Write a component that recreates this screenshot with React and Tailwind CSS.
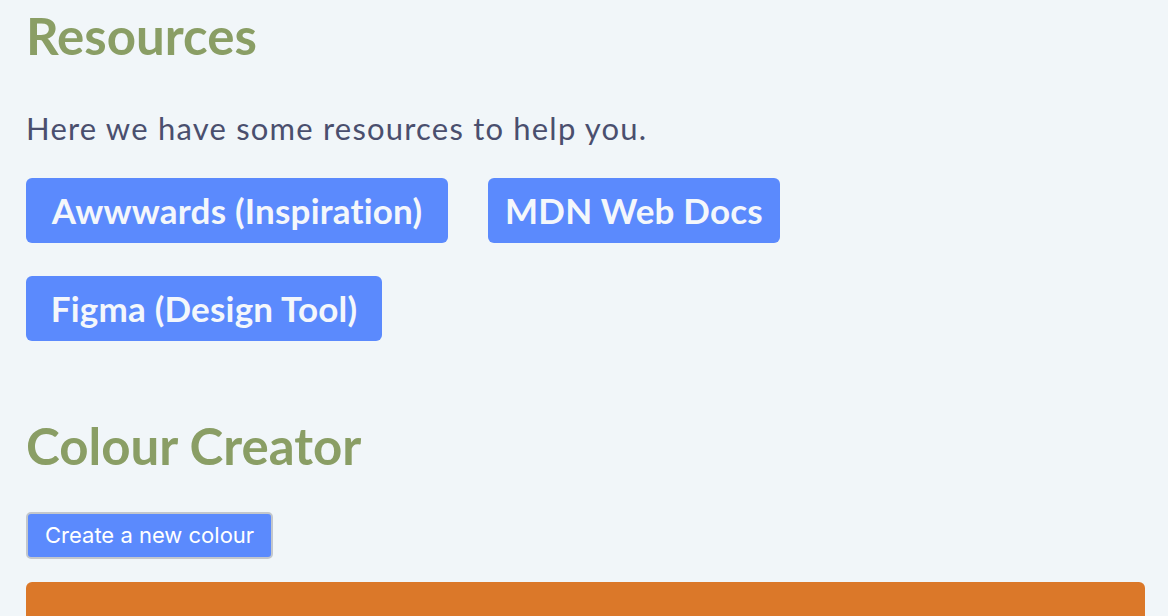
import React from "react";

const links = [
  [
    { label: "Awwwards (Inspiration)", w: "w-[422px]" },
    { label: "MDN Web Docs", w: "w-[292px]" },
  ],
  [{ label: "Figma (Design Tool)", w: "w-[356px]" }],
];

const LinkButton = ({ label, w }) => (
  <a
    href="#"
    className={`flex h-[65px] ${w} items-center justify-center rounded-[6px] bg-[#5b8afd] text-[35px] font-bold tracking-[0.2px] text-[#f4f7fb]`}
  >
    {label}
  </a>
);

export default function App() {
  return (
    <div className="h-[616px] overflow-hidden bg-[#f1f6f9] pl-[26px] pr-[23px] font-['Lato',sans-serif]">
      <h1 className="pt-[10px] text-[51px] font-bold leading-none text-[#8a9e65]">Resources</h1>
      <p className="mt-[52px] text-[31px] leading-none tracking-[1.2px] text-[#4a4f6e]">
        Here we have some resources to help you.
      </p>
      <div className="mt-[34px] flex flex-col gap-[33px]">
        {links.map((row, i) => (
          <div key={i} className="flex gap-[40px]">
            {row.map((l) => (
              <LinkButton key={l.label} {...l} />
            ))}
          </div>
        ))}
      </div>

      <h2 className="mt-[79px] text-[51px] font-bold leading-none text-[#8a9e65]">Colour Creator</h2>
      <button className="mt-[41px] flex h-[47px] items-center rounded-[5px] border-2 border-[#c3c7cc] bg-[#5b8afd] px-[17px] font-['Inter',sans-serif] text-[22px] text-white">
        Create a new colour
      </button>
      <div className="mt-[23px] h-[120px] rounded-[6px] bg-[#db7829]" />
    </div>
  );
}
